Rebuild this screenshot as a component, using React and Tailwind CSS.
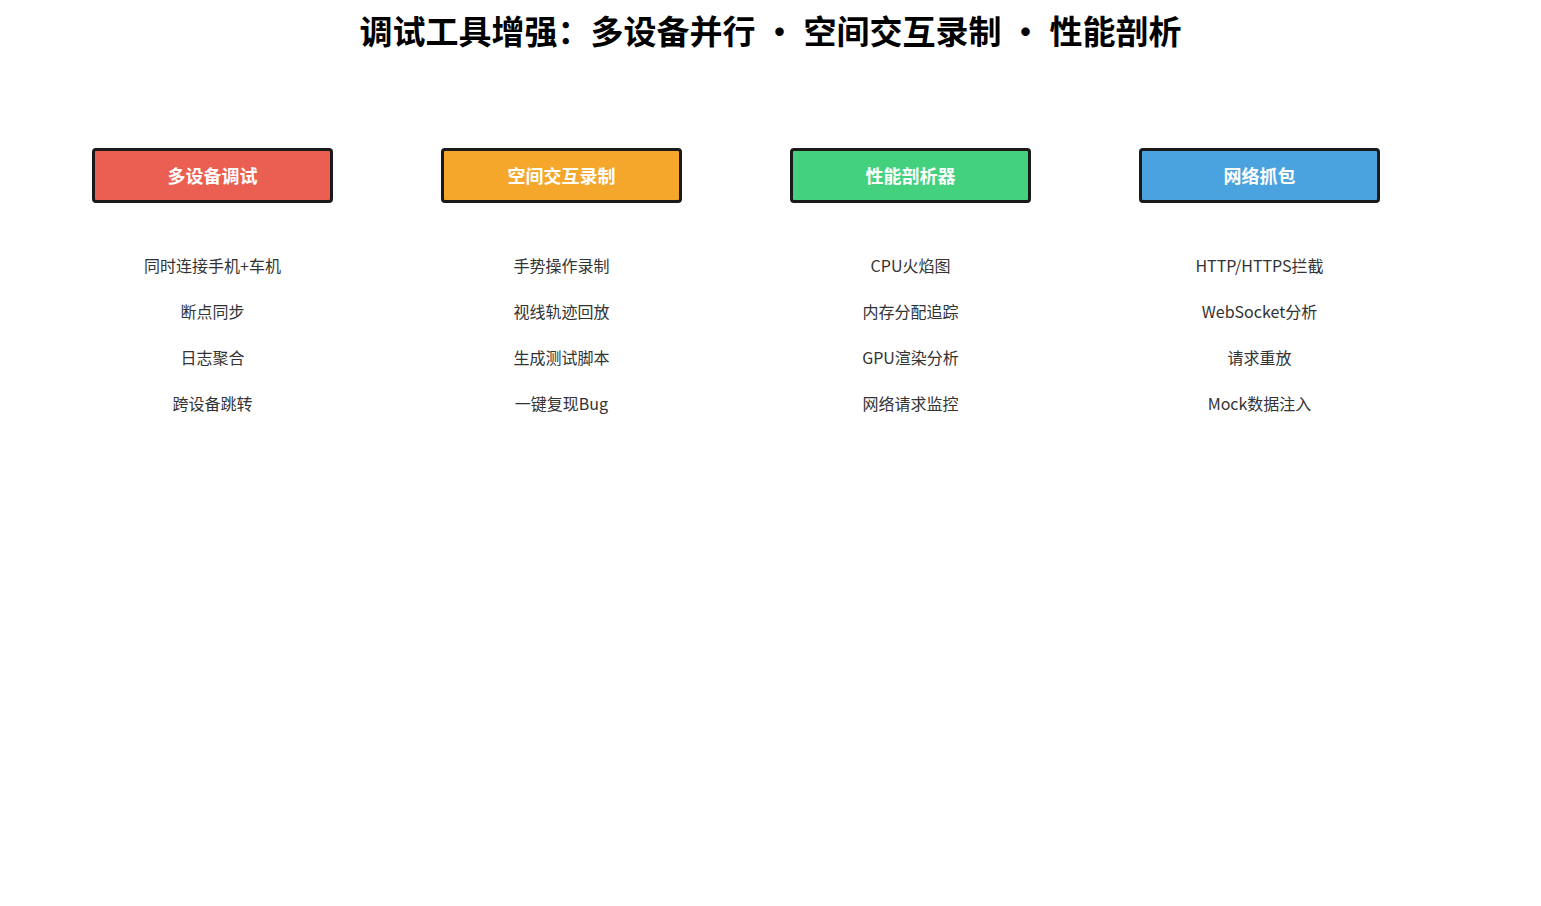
export default function App() {
  const cols = [
    { t: "多设备调试", c: "bg-[#eb5f52]", items: ["同时连接手机+车机", "断点同步", "日志聚合", "跨设备跳转"] },
    { t: "空间交互录制", c: "bg-[#f5a72b]", items: ["手势操作录制", "视线轨迹回放", "生成测试脚本", "一键复现Bug"] },
    { t: "性能剖析器", c: "bg-[#43d17e]", items: ["CPU火焰图", "内存分配追踪", "GPU渲染分析", "网络请求监控"] },
    { t: "网络抓包", c: "bg-[#4aa3df]", items: ["HTTP/HTTPS拦截", "WebSocket分析", "请求重放", "Mock数据注入"] },
  ];
  const font = { fontFamily: '"Noto Sans CJK SC", "Noto Sans", sans-serif' };
  return (
    <div className="w-[1541px] h-[906px] bg-white" style={font}>
      <h1 className="pt-[8px] text-center text-[33px] leading-[44px] font-bold text-black">
        调试工具增强：多设备并行 • 空间交互录制 • 性能剖析
      </h1>
      <div className="flex gap-[108px] pl-[92px] pt-[96px]">
        {cols.map((c) => (
          <div key={c.t} className="w-[241px] flex flex-col items-center">
            <div className={`w-full h-[55px] ${c.c} border-[3px] border-[#1a1a1a] rounded-[4px] flex items-center justify-center text-white font-bold text-[18px]`}>
              {c.t}
            </div>
            <div className="mt-[50px] flex flex-col items-center gap-[22px]">
              {c.items.map((i) => (
                <div key={i} className="text-[16px] leading-[24px] text-[#333]">{i}</div>
              ))}
            </div>
          </div>
        ))}
      </div>
    </div>
  );
}
